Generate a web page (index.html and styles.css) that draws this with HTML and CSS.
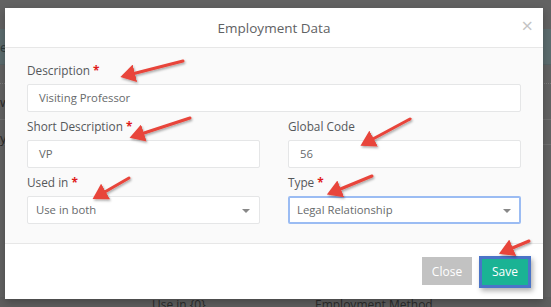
FILE: index.html
```html
<!DOCTYPE html>
<html>
<head>
<meta charset="utf-8">
<link rel="stylesheet" href="styles.css">
</head>
<body>
<div class="page">
  <div class="page-top"></div>
  <div class="page-band"><span class="band-text">e</span></div>
  <div class="page-row dotted"><span class="row-text"></span></div>
  <div class="page-row"><span class="row-text">w</span></div>
  <div class="page-row short"><span class="row-text">y</span></div>
  <div class="page-fill"></div>
  <div class="page-bottom">
    <span class="col-a">Use in {0}</span>
    <span class="col-b">Employment Method</span>
  </div>
</div>

<div class="modal">
  <div class="modal-header">
    <h4 class="modal-title">Employment Data</h4>
    <span class="close-x">&times;</span>
  </div>
  <div class="modal-body">
    <div class="group">
      <label class="lbl">Description <span class="req">*</span></label>
      <div class="input">Visiting Professor</div>
    </div>
    <div class="cols">
      <div class="group">
        <label class="lbl">Short Description <span class="req">*</span></label>
        <div class="input">VP</div>
      </div>
      <div class="group">
        <label class="lbl">Global Code</label>
        <div class="input">56</div>
      </div>
      <div class="group">
        <label class="lbl">Used in <span class="req">*</span></label>
        <div class="input select">Use in both<span class="caret"></span></div>
      </div>
      <div class="group">
        <label class="lbl">Type <span class="req">*</span></label>
        <div class="input select focus">Legal Relationship<span class="caret"></span></div>
      </div>
    </div>
  </div>
  <div class="modal-footer">
    <button class="btn btn-close">Close</button>
    <button class="btn btn-save">Save</button>
  </div>
</div>

<svg class="arrows" width="551" height="307" viewBox="0 0 551 307">
  <defs>
    <filter id="sh" x="-20%" y="-20%" width="140%" height="140%">
      <feDropShadow dx="1" dy="1.5" stdDeviation="1.2" flood-color="#000" flood-opacity="0.35"/>
    </filter>
    <marker id="ah" markerWidth="6" markerHeight="6" refX="1" refY="3" orient="auto-start-reverse" markerUnits="strokeWidth">
      <path d="M0,0 L0,6 L5,3 z" fill="#e8443a"/>
    </marker>
  </defs>
  <g filter="url(#sh)" stroke="#e8443a" stroke-width="3" stroke-linecap="round" fill="none">
    <line x1="183" y1="61" x2="132" y2="74" marker-end="url(#ah)"/>
    <line x1="190" y1="118" x2="141" y2="134" marker-end="url(#ah)"/>
    <line x1="410" y1="119" x2="371" y2="140" marker-end="url(#ah)"/>
    <line x1="129" y1="178" x2="103" y2="193" marker-end="url(#ah)"/>
    <line x1="372" y1="176" x2="338" y2="190" marker-end="url(#ah)"/>
    <line x1="529" y1="241" x2="510" y2="249" marker-end="url(#ah)"/>
  </g>
</svg>
</body>
</html>
```

FILE: styles.css
```css
* { box-sizing: border-box; }
html, body { margin: 0; padding: 0; }
body {
  width: 551px;
  height: 307px;
  overflow: hidden;
  position: relative;
  background: #626262;
  font-family: "Open Sans", "DejaVu Sans", sans-serif;
}

.page { display: flex; flex-direction: column; height: 307px; }
.page-top { height: 29px; background: #626262; }
.page-band {
  height: 36px;
  background: #5c6c6e;
  border-bottom: 1px solid #566466;
  font-size: 13px;
  color: #2e3a3c;
  line-height: 36px;
}
.page-row {
  height: 36px;
  border-bottom: 1px solid #6f6f6f;
  font-size: 13px;
  color: #2a2a2a;
  line-height: 36px;
}
.page-row.dotted { height: 19px; border-bottom: 1px dotted #7a7a7a; }
.page-row.short { height: 25px; }
.page-fill { flex: 1; }
.page-bottom {
  height: 10px;
  font-size: 12px;
  color: #2b2b2b;
  line-height: 16px;
  display: flex;
  background: #5e5e5e;
  overflow: hidden;
}
.col-a { margin-left: 152px; width: 163px; }

.modal {
  position: absolute;
  left: 5px;
  top: 8px;
  width: 538px;
  height: 291px;
  background: #fff;
  display: flex;
  flex-direction: column;
  box-shadow: 0 3px 8px rgba(0,0,0,0.25);
}
.modal-header {
  height: 40px;
  border-bottom: 1px solid #e7e7e7;
  display: flex;
  align-items: center;
  justify-content: center;
  position: relative;
}
.modal-title {
  margin: 0;
  font-size: 13.5px;
  font-weight: 400;
  color: #5f6264;
}
.close-x {
  position: absolute;
  right: 10px;
  top: 8px;
  font-size: 20px;
  line-height: 20px;
  color: #c4c4c4;
}
.modal-body {
  background: #fafafa;
  padding: 13px 22px 16px 22px;
  height: 196px;
  border-bottom: 1px solid #e7e7e7;
}
.group { margin-bottom: 5px; }
.cols {
  display: grid;
  grid-template-columns: 233px 233px;
  column-gap: 28px;
}
.lbl {
  display: block;
  height: 18px;
  margin-bottom: 5px;
  font-size: 11.8px;
  font-weight: 400;
  color: #55585a;
  line-height: 18px;
}
.req { color: #e01b1b; font-weight: 700; }
.input {
  height: 28px;
  border: 1px solid #e5e6e7;
  border-radius: 2px;
  background: #fff;
  padding: 0 11px;
  font-size: 11.3px;
  color: #676a6c;
  line-height: 26px;
  position: relative;
}
.select { padding-left: 8px; }
.focus { border: 2px solid #9bbcf3; line-height: 24px; padding-left: 7px; }
.caret {
  position: absolute;
  right: 9px;
  top: 12px;
  width: 0;
  height: 0;
  border-left: 4px solid transparent;
  border-right: 4px solid transparent;
  border-top: 4px solid #888;
}
.focus .caret { right: 8px; top: 11px; }

.modal-footer {
  flex: 1;
  display: flex;
  justify-content: flex-end;
  align-items: center;
  gap: 10px;
  padding: 0 15px 1px 0;
}
.btn {
  font-family: "Open Sans", "DejaVu Sans", sans-serif;
  font-size: 12px;
  border: none;
  color: #fff;
  height: 28px;
  padding: 0 6px;
  border-radius: 0;
}
.btn-close { background: #c2c2c2; width: 50px; }
.btn-save {
  background: #1ab394;
  width: 46px;
  height: 26px;
  box-shadow: 0 0 0 3px #4a74c8, 2px 3px 5px 3px rgba(0,0,0,0.3);
  outline: none;
  margin-top: 1px;
}

.arrows { position: absolute; left: 0; top: 0; pointer-events: none; }
```
